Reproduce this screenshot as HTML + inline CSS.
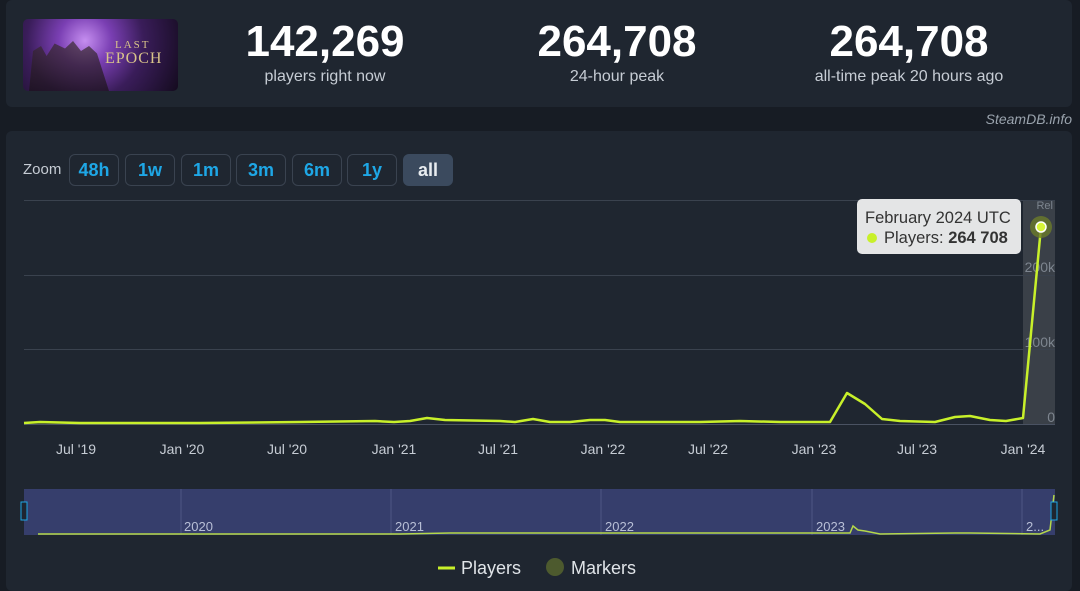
<!DOCTYPE html>
<html><head><meta charset="utf-8"><style>
body{margin:0;width:1080px;height:584px;background:#171c24;font-family:"Liberation Sans",sans-serif;overflow:hidden;position:relative}
.p{position:absolute;background:#1f2630;border-radius:6px}
.thumb{position:absolute;left:23px;top:19px;width:155px;height:72px;border-radius:5px;background:radial-gradient(circle at 40% 30%,#c58ef0 0,#7a3fb3 25%,#3a1d5a 55%,#140b1e 100%);overflow:hidden}
.st{position:absolute;top:19px;width:280px;text-align:center;color:#fff}
.st b{display:block;font-size:44px;line-height:46px;font-weight:bold}
.st span{display:block;font-size:16px;color:#c6ccd4;margin-top:3px}
.btn{position:absolute;top:154px;height:30px;border:1px solid #3a4350;border-radius:6px;color:#1ea7e6;font-weight:bold;font-size:18px;line-height:30px;text-align:center;width:48px}
.t{position:absolute;color:#c6ccd4;font-size:14px}
</style></head><body>
<div class="p" style="left:6px;top:0;width:1066px;height:107px"></div>
<div class="thumb">
<div style="position:absolute;left:6px;top:22px;width:80px;height:50px;background:linear-gradient(#3a2a30,#1a1218);opacity:.7;clip-path:polygon(0 100%,5% 20%,15% 10%,22% 30%,32% 5%,45% 15%,55% 0,65% 20%,75% 10%,85% 25%,100% 100%)"></div>
<div style="position:absolute;left:92px;top:20px;color:#d9c48a;font-size:11px;letter-spacing:2px;font-family:'Liberation Serif',serif">LAST</div><div style="position:absolute;left:82px;top:31px;color:#d9c48a;font-size:16px;letter-spacing:1px;font-family:'Liberation Serif',serif">EPOCH</div></div>
<div class="st" style="left:185px"><b>142,269</b><span>players right now</span></div>
<div class="st" style="left:477px"><b>264,708</b><span>24-hour peak</span></div>
<div class="st" style="left:769px"><b>264,708</b><span>all-time peak 20 hours ago</span></div>
<div style="position:absolute;right:8px;top:111px;color:#9aa3ad;font-style:italic;font-size:14px">SteamDB.info</div>
<div class="p" style="left:6px;top:131px;width:1066px;height:460px"></div>
<div class="t" style="left:23px;top:161px;font-size:15px">Zoom</div>
<div class="btn" style="left:69px">48h</div>
<div class="btn" style="left:125px">1w</div>
<div class="btn" style="left:181px">1m</div>
<div class="btn" style="left:236px">3m</div>
<div class="btn" style="left:292px">6m</div>
<div class="btn" style="left:347px">1y</div>
<div class="btn" style="left:403px;background:#3b4a5e;border-color:#3b4a5e;color:#e8ecf0">all</div>
<svg style="position:absolute;left:0;top:0" width="1080" height="584">
<rect x="1023" y="200" width="32" height="224" fill="#3a4048"/>
<g stroke="#3a424e" stroke-width="1"><line x1="24" y1="200.5" x2="1055" y2="200.5"/><line x1="24" y1="275.5" x2="1055" y2="275.5"/><line x1="24" y1="349.5" x2="1055" y2="349.5"/><line x1="24" y1="424.5" x2="1055" y2="424.5" stroke="#4a5262"/></g>
<g fill="#7d858f" font-size="14" text-anchor="end" font-family="Liberation Sans"><text x="1055" y="272">200k</text><text x="1055" y="347">100k</text><text x="1055" y="422">0</text><text x="1053" y="209" font-size="11">Rel</text></g>
<g fill="#c6ccd4" font-size="14" text-anchor="middle" font-family="Liberation Sans"><text x="76" y="454">Jul '19</text><text x="182" y="454">Jan '20</text><text x="287" y="454">Jul '20</text><text x="394" y="454">Jan '21</text><text x="498" y="454">Jul '21</text><text x="603" y="454">Jan '22</text><text x="708" y="454">Jul '22</text><text x="814" y="454">Jan '23</text><text x="917" y="454">Jul '23</text><text x="1023" y="454">Jan '24</text></g>
<polyline fill="none" stroke="#c8f02a" stroke-width="2.5" stroke-linejoin="round" points="24,423 40,422 80,423 200,423 300,422 375,421 394,422 410,421 427,418 445,420 500,421 515,422 533,419 550,422 570,422 590,420 605,420 620,422 700,422 740,421 780,422 830,422 847,393 865,404 882,419 900,421 935,422 955,417 970,416 990,420 1006,421 1023,418 1041,227"/>
<circle cx="1041" cy="227" r="11" fill="#6b7a2a" opacity=".8"/><circle cx="1041" cy="227" r="5" fill="#d8f53a" stroke="#fff" stroke-width="1.5"/>
<rect x="857" y="199" width="164" height="55" rx="5" fill="#e4e5e6"/>
<text x="865" y="223" font-size="16.5" fill="#333" font-family="Liberation Sans">February 2024 UTC</text>
<circle cx="872" cy="238" r="5" fill="#c8f02a"/>
<text x="884" y="243" font-size="16.5" fill="#333" font-family="Liberation Sans">Players: <tspan font-weight="bold">264 708</tspan></text>
<rect x="24" y="489" width="1031" height="46" fill="#363e6c"/>
<g stroke="#4e5684"><line x1="181" y1="489" x2="181" y2="535"/><line x1="391" y1="489" x2="391" y2="535"/><line x1="601" y1="489" x2="601" y2="535"/><line x1="812" y1="489" x2="812" y2="535"/><line x1="1022" y1="489" x2="1022" y2="535"/></g>
<g fill="#b8bfd6" font-size="13" font-family="Liberation Sans"><text x="184" y="531">2020</text><text x="395" y="531">2021</text><text x="605" y="531">2022</text><text x="816" y="531">2023</text><text x="1026" y="531">2...</text></g>
<polyline fill="none" stroke="#b5d84a" stroke-width="1.5" points="38,534 400,534 450,533 850,533 853,526 858,530 865,531 880,534 955,533 970,533 1040,534 1050,530 1054,495"/>
<rect x="21" y="502" width="6" height="18" fill="#1f2630" stroke="#1ea7e6"/>
<rect x="1051" y="502" width="6" height="18" fill="#1f2630" stroke="#1ea7e6"/>
<line x1="438" y1="568" x2="455" y2="568" stroke="#c8f02a" stroke-width="3"/>
<text x="461" y="574" font-size="18" fill="#e0e4e8" font-family="Liberation Sans">Players</text>
<circle cx="555" cy="567" r="9" fill="#4d5a2e"/>
<text x="571" y="574" font-size="18" fill="#e0e4e8" font-family="Liberation Sans">Markers</text>
</svg>
</body></html>
